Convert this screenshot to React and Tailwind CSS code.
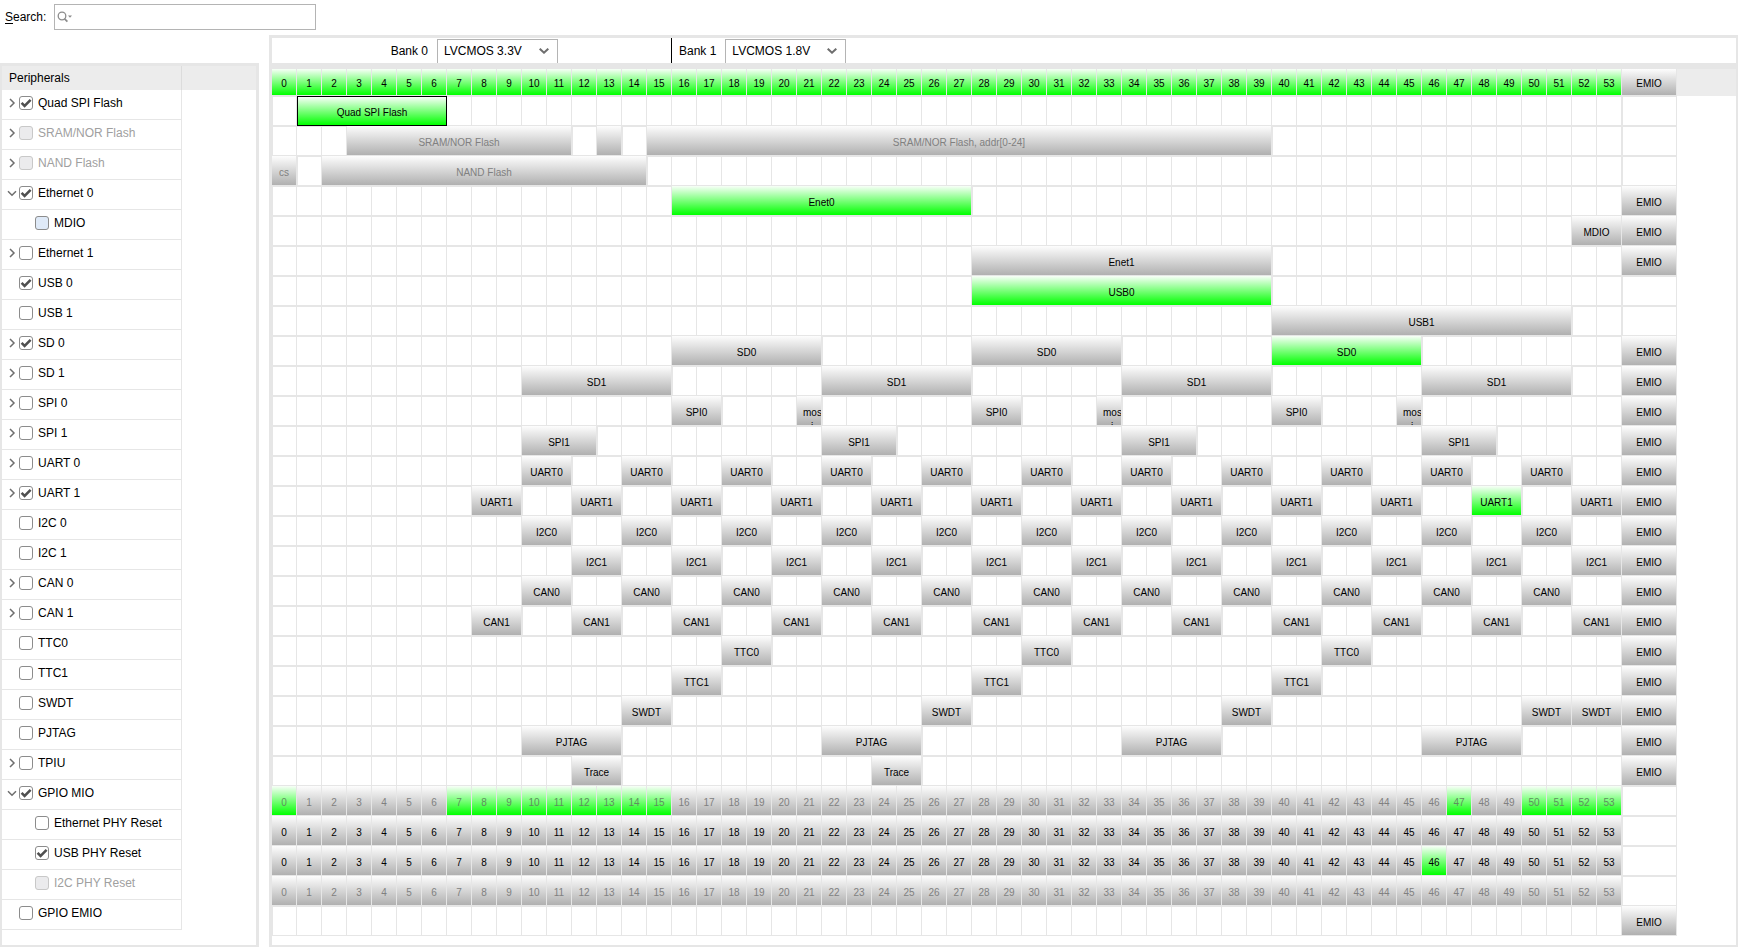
import React from "react";

const PERIPHERALS = [
  { name: "Quad SPI Flash", arrow: "right", checked: true, blocks: [[1, 6, "Quad SPI Flash", "selected"]] },
  {
    name: "SRAM/NOR Flash", arrow: "right", disabled: true,
    blocks: [[3, 9, "SRAM/NOR Flash", "disabled"], [13, 1, "", "disabled"], [15, 25, "SRAM/NOR Flash, addr[0-24]", "disabled"]],
  },
  { name: "NAND Flash", arrow: "right", disabled: true, blocks: [[0, 1, "cs", "disabled"], [2, 13, "NAND Flash", "disabled"]] },
  { name: "Ethernet 0", arrow: "down", checked: true, emio: true, blocks: [[16, 12, "Enet0", "on"]] },
  { name: "MDIO", child: true, tint: true, emio: true, blocks: [[52, 2, "MDIO"]] },
  { name: "Ethernet 1", arrow: "right", emio: true, blocks: [[28, 12, "Enet1"]] },
  { name: "USB 0", checked: true, blocks: [[28, 12, "USB0", "on"]] },
  { name: "USB 1", blocks: [[40, 12, "USB1"]] },
  {
    name: "SD 0", arrow: "right", checked: true, emio: true,
    blocks: [[16, 6, "SD0"], [28, 6, "SD0"], [40, 6, "SD0", "on"]],
  },
  { name: "SD 1", arrow: "right", emio: true, blocks: every("SD1", 6, [10, 22, 34, 46]) },
  {
    name: "SPI 0", arrow: "right", emio: true,
    blocks: [16, 28, 40].flatMap((s) => [[s, 2, "SPI0"], [s + 5, 1, "mosi pin"]]),
  },
  { name: "SPI 1", arrow: "right", emio: true, blocks: every("SPI1", 3, [10, 22, 34, 46]) },
  { name: "UART 0", arrow: "right", emio: true, blocks: every("UART0", 2, range(10, 50)) },
  {
    name: "UART 1", arrow: "right", checked: true, emio: true,
    blocks: range(8, 52).map((s) => [s, 2, "UART1", s === 48 ? "on" : undefined]),
  },
  { name: "I2C 0", emio: true, blocks: every("I2C0", 2, range(10, 50)) },
  { name: "I2C 1", emio: true, blocks: every("I2C1", 2, range(12, 52)) },
  { name: "CAN 0", arrow: "right", emio: true, blocks: every("CAN0", 2, range(10, 50)) },
  { name: "CAN 1", arrow: "right", emio: true, blocks: every("CAN1", 2, range(8, 52)) },
  { name: "TTC0", emio: true, blocks: every("TTC0", 2, [18, 30, 42]) },
  { name: "TTC1", emio: true, blocks: every("TTC1", 2, [16, 28, 40]) },
  { name: "SWDT", emio: true, blocks: every("SWDT", 2, [14, 26, 38, 50, 52]) },
  { name: "PJTAG", emio: true, blocks: every("PJTAG", 4, [10, 22, 34, 46]) },
  { name: "TPIU", arrow: "right", emio: true, blocks: every("Trace", 2, [12, 24]) },
  {
    name: "GPIO MIO", arrow: "down", checked: true,
    blocks: pins("disabled", [0, 7, 8, 9, 10, 11, 12, 13, 14, 15, 47, 50, 51, 52, 53]),
  },
  { name: "Ethernet PHY Reset", child: true, blocks: pins("off", []) },
  { name: "USB PHY Reset", child: true, checked: true, blocks: pins("off", [46]) },
  { name: "I2C PHY Reset", child: true, disabled: true, blocks: pins("disabled", []) },
  { name: "GPIO EMIO", emio: true, blocks: [] },
];

function range(from, to) {
  const out = [];
  for (let i = from; i <= to; i += 4) out.push(i);
  return out;
}

function every(label, span, starts) {
  return starts.map((s) => [s, span, label]);
}

function pins(kind, active) {
  return Array.from({ length: 54 }, (_, i) => {
    if (!active.includes(i)) return [i, 1, String(i), kind];
    return [i, 1, String(i), kind === "disabled" ? "onDisabled" : "on"];
  });
}

const GREEN = "bg-linear-to-b/srgb from-[#f8fff8] to-[#00ff00]";
const GRAY = "bg-linear-to-b/srgb from-[#fdfdfd] to-[#b0b0b0]";

const BLOCK_STYLES = {
  off: GRAY + " text-black",
  on: GREEN + " text-black",
  disabled: GRAY + " text-[#808080]",
  onDisabled: GREEN + " text-[#5f8f5f]",
  selected: GREEN + " text-black",
};

function Block({ label, kind = "off" }) {
  return (
    <button
      type="button"
      aria-label={label || "Unnamed signal"}
      disabled={kind === "disabled" || kind === "onDisabled"}
      className={"block h-[29px] w-full overflow-hidden pt-1 text-center whitespace-nowrap leading-3 " + BLOCK_STYLES[kind]}
    >
      {label}
    </button>
  );
}

function SelectedBlock({ label }) {
  return (
    <button
      type="button"
      className={"block h-[30px] w-full border border-black pt-1 text-center leading-3 " + BLOCK_STYLES.selected}
    >
      {label}
    </button>
  );
}

function ClippedBlock() {
  return (
    <button type="button" className={"block h-[29px] w-full overflow-hidden pt-2.5 pl-1.5 text-left " + BLOCK_STYLES.off}>
      <span className="block h-[19px] w-[18px] overflow-hidden leading-[14px]">
        mos
        <br />
        <span className="pl-2">i</span>
      </span>
    </button>
  );
}

function PinRow({ row }) {
  const cells = [];
  let pin = 0;
  let afterBlock = true;
  const blocks = new Map(row.blocks.map((b) => [b[0], b]));
  while (pin < 54) {
    const block = blocks.get(pin);
    if (block) {
      const [start, span, label, kind] = block;
      const selected = kind === "selected";
      cells.push(
        <td key={start} colSpan={span} className={selected ? "p-0 align-top" : "border-r border-b border-[#e6e6e6] p-0 align-top"}>
          {selected ? <SelectedBlock label={label} /> : label === "mosi pin" ? <ClippedBlock /> : <Block label={label} kind={kind} />}
        </td>
      );
      pin += span;
      afterBlock = !selected;
    } else {
      cells.push(
        <td
          key={pin}
          className={
            afterBlock
              ? "border border-[#e6e6e6] bg-white p-0"
              : "border-t border-r border-b border-[#e6e6e6] bg-white p-0"
          }
        />
      );
      pin += 1;
      afterBlock = false;
    }
  }
  return (
    <tr className="h-[30px]">
      {cells}
      {row.emio ? (
        <td className="border-r border-b border-[#e6e6e6] p-0 align-top">
          <Block label="EMIO" />
        </td>
      ) : (
        <td className="border border-[#e6e6e6] bg-white p-0" />
      )}
      <td className="p-0" />
    </tr>
  );
}

function Arrow({ dir }) {
  return (
    <svg viewBox="0 0 10 10" className="size-[10px]" fill="none" stroke="#6e6e6e" strokeWidth="1.5">
      {dir === "right" ? <path d="M3 1 L7 5 L3 9" /> : <path d="M1 3.2 L5 7.2 L9 3.2" />}
    </svg>
  );
}

function CheckBox({ id, checked, disabled, tint }) {
  const look = disabled
    ? "border-[#c8c8c8] bg-[#ebebed]"
    : tint
      ? "border-[#8c8c8c] bg-[#dfeaf8]"
      : "border-[#8c8c8c] bg-white";
  return (
    <span className="grid size-[14px] shrink-0">
      <input
        id={id}
        type="checkbox"
        defaultChecked={checked}
        disabled={disabled}
        className={"peer col-start-1 row-start-1 size-[14px] appearance-none rounded-[3px] border " + look}
      />
      <svg
        viewBox="0 0 14 14"
        className="pointer-events-none invisible col-start-1 row-start-1 size-[14px] peer-checked:visible"
        fill="none"
        stroke="#505050"
        strokeWidth="2.6"
      >
        <path d="M2.6 6.8 L5.6 9.8 L11.6 3.8" />
      </svg>
    </span>
  );
}

function PeripheralTree() {
  return (
    <aside className="mt-7 flex w-[259px] shrink-0 flex-col border-t-[3px] border-r-[3px] border-b-2 border-l-2 border-[#e6e6e6]">
      <div className="flex h-6 bg-[#ececec]">
        <h2 className="w-[180px] border-r border-[#dcdcdc] pl-[7px] leading-6">Peripherals</h2>
      </div>
      <ul className="w-[180px] border-r border-[#e6e6e6]">
        {PERIPHERALS.map((p, i) => (
          <li
            key={p.name}
            className={
              "flex h-[30px] items-center border-b border-[#e6e6e6] pb-[3px] " + (p.child ? "pl-[33px]" : "pl-1")
            }
          >
            {!p.child && (
              <span className="flex w-[13px] shrink-0 items-center pl-[1px]">
                {p.arrow && (
                  <button type="button" aria-label={(p.arrow === "down" ? "Collapse " : "Expand ") + p.name}>
                    <Arrow dir={p.arrow} />
                  </button>
                )}
              </span>
            )}
            <CheckBox id={"peripheral-" + i} checked={p.checked} disabled={p.disabled} tint={p.tint} />
            <label htmlFor={"peripheral-" + i} className={"pl-[5px] whitespace-nowrap " + (p.disabled ? "text-[#a0a0a0]" : "")}>
              {p.name}
            </label>
          </li>
        ))}
      </ul>
    </aside>
  );
}

function BankSelect({ id, label, value }) {
  return (
    <div className="flex h-[25px] items-center">
      <label htmlFor={id} className="pr-[9px]">{label}</label>
      <div className="grid h-6 w-[121px] self-end">
        <select
          id={id}
          defaultValue={value}
          className="col-start-1 row-start-1 appearance-none border border-b-0 border-[#b4b4b4] bg-white pb-0.5 pl-1.5"
        >
          <option>LVCMOS 1.8V</option>
          <option>LVCMOS 2.5V</option>
          <option>LVCMOS 3.3V</option>
        </select>
        <svg
          viewBox="0 0 10 6"
          className="pointer-events-none col-start-1 row-start-1 mr-[9px] h-[6px] w-[10px] self-center justify-self-end"
          fill="none"
          stroke="#6e6e6e"
          strokeWidth="2"
        >
          <path d="M0.7 0.7 L5 4.7 L9.3 0.7" />
        </svg>
      </div>
    </div>
  );
}

function PinTable() {
  return (
    <table className="w-full table-fixed border-separate border-spacing-0 text-[10px] leading-3">
      <colgroup>
        {Array.from({ length: 54 }, (_, i) => (
          <col key={i} className="w-[25px]" />
        ))}
        <col className="w-[55px]" />
        <col />
      </colgroup>
      <thead>
        <tr className="h-[27px]">
          {Array.from({ length: 54 }, (_, i) => (
            <th key={i} scope="col" className="border-r border-b border-[#e6e6e6] p-0 font-normal">
              <div className={"h-[26px] leading-[29px] " + GREEN}>{i}</div>
            </th>
          ))}
          <th scope="col" className="border-r border-b border-[#e6e6e6] p-0 font-normal">
            <div className={"h-[26px] leading-[29px] " + GRAY}>EMIO</div>
          </th>
          <td className="bg-[#ececec] p-0" />
        </tr>
      </thead>
      <tbody>
        {PERIPHERALS.map((row) => (
          <PinRow key={row.name} row={row} />
        ))}
      </tbody>
    </table>
  );
}

export default function App() {
  return (
    <div className="flex min-h-screen flex-col bg-white font-['Liberation_Sans',Arial,sans-serif] text-xs text-black">
      <header className="flex h-[35px] items-center pb-px pl-[5px]">
        <label htmlFor="search" className="w-[49px]">
          <span className="underline underline-offset-2">S</span>earch:
        </label>
        <div className="grid h-[26px] w-[262px]">
          <input id="search" type="text" className="col-start-1 row-start-1 border border-[#b4b4b4] pl-5 outline-none" />
          <svg
            viewBox="0 0 16 12"
            className="pointer-events-none col-start-1 row-start-1 ml-[3px] h-3 w-4 self-center"
            fill="none"
            stroke="#8c8c8c"
            strokeWidth="1.3"
          >
            <circle cx="5" cy="5" r="3.8" />
            <path d="M7.6 7.8 L10.4 10.6" strokeWidth="1.8" />
            <path d="M11 4.5 H15 L13 6.7 Z" fill="#8c8c8c" stroke="none" />
          </svg>
        </div>
      </header>
      <div className="flex flex-1 gap-2.5">
        <PeripheralTree />
        <main className="min-w-0 flex-1 border-t-[3px] border-r-2 border-b-2 border-l-[3px] border-[#e6e6e6]">
          <div className="flex border-b-[6px] border-[#e6e6e6]">
            <div className="flex w-[400px] justify-end border-r border-black pr-[113px]">
              <BankSelect id="bank-0" label="Bank 0" value="LVCMOS 3.3V" />
            </div>
            <div className="pl-[7px]">
              <BankSelect id="bank-1" label="Bank 1" value="LVCMOS 1.8V" />
            </div>
          </div>
          <PinTable />
        </main>
      </div>
    </div>
  );
}
